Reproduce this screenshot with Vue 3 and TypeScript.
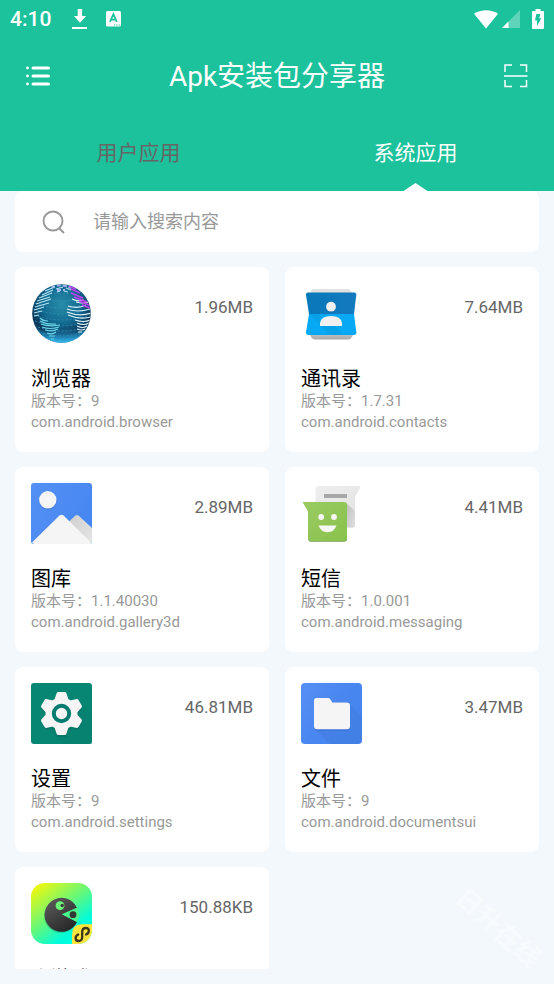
<script setup lang="ts">
import { ref } from 'vue'

interface AppItem {
  icon: string
  name: string
  version?: string
  pkg?: string
  size: string
}

const tabs: string[] = ['用户应用', '系统应用']
const activeTab = ref(1)
const keyword = ref('')

const apps: AppItem[] = [
  { icon: 'browser', name: '浏览器', version: '9', pkg: 'com.android.browser', size: '1.96MB' },
  { icon: 'contacts', name: '通讯录', version: '1.7.31', pkg: 'com.android.contacts', size: '7.64MB' },
  { icon: 'gallery', name: '图库', version: '1.1.40030', pkg: 'com.android.gallery3d', size: '2.89MB' },
  { icon: 'messaging', name: '短信', version: '1.0.001', pkg: 'com.android.messaging', size: '4.41MB' },
  { icon: 'settings', name: '设置', version: '9', pkg: 'com.android.settings', size: '46.81MB' },
  { icon: 'files', name: '文件', version: '9', pkg: 'com.android.documentsui', size: '3.47MB' },
  { icon: 'game', name: '小游戏', size: '150.88KB' },
]

const gearAngles = [0, 60, 120, 180, 240, 300]
</script>

<template>
  <div class="page">
    <header class="header">
      <div class="status">
        <span class="time">4:10</span>
        <svg class="download" width="16" height="22" viewBox="0 0 16 22">
          <path fill="#fff" d="M5.700 1h4.400v7h4L8 14.800 2 8h3.700zM0 19h15v2H0z" />
        </svg>
        <svg class="letter" width="16" height="16" viewBox="0 0 16 16">
          <rect width="15" height="15.500" rx="1.500" fill="#fff" />
          <path d="M4 10.800 7.400 3.200 10.800 10.800M5.200 8.600h4.500" fill="none" stroke="#1bc29c" stroke-width="1.800" />
          <path d="M8 14h1.200M10.300 14h1.200M12.600 14h1.200" stroke="#1bc29c" stroke-width="1.200" />
        </svg>
        <svg class="wifi" width="24" height="19" viewBox="0 0 24 19">
          <path fill="#fff" d="M0 3.800C6.500-1.100 17.500-1.100 24 3.800L12 18.500z" />
        </svg>
        <svg class="signal" width="18" height="18" viewBox="0 0 18 18">
          <path fill="#fff" opacity=".3" d="M18 0v18H0z" />
          <path fill="#fff" d="M6.500 11.500V18H0z" />
        </svg>
        <svg class="battery" width="12" height="20" viewBox="0 0 12 20">
          <path fill="#fff" d="M3.500 0h5v2H11q1 0 1 1v16q0 1-1 1H1q-1 0-1-1V3q0-1 1-1h2.500z" />
          <path fill="#1bc29c" d="M4.300 5h4L7.300 9.300h2L5 17v-5.500H3z" />
        </svg>
      </div>
      <div class="toolbar">
        <button class="tool" type="button" aria-label="菜单">
          <svg width="24" height="22" viewBox="0 0 24 22">
            <path stroke="#fff" stroke-width="3" stroke-linecap="round" d="M7 3h15.500M7 11h15.500M7 19h15.500" />
            <g fill="#fff"><circle cx="1.500" cy="3" r="1.400" /><circle cx="1.500" cy="11" r="1.400" /><circle cx="1.500" cy="19" r="1.400" /></g>
          </svg>
        </button>
        <h1>Apk安装包分享器</h1>
        <button class="tool" type="button" aria-label="扫描">
          <svg width="24" height="24" viewBox="0 0 24 24">
            <path fill="none" stroke="#fff" stroke-width="1.500" d="M8 1H1v7M16 1h6.500v7M1 16v6.500h7M16 22.500h6.500V16M0 12h23.500" />
          </svg>
        </button>
      </div>
      <nav class="tabs">
        <button
          v-for="(tab, i) in tabs"
          :key="tab"
          type="button"
          class="tab"
          :class="{ active: i === activeTab }"
          @click="activeTab = i"
        >{{ tab }}</button>
      </nav>
    </header>

    <main class="content">
      <label class="search">
        <svg width="24" height="24" viewBox="0 0 24 24" fill="none" stroke="#999" stroke-width="1.900">
          <circle cx="11" cy="11" r="9.500" />
          <path d="m17.500 18.500 4.500 4.500" />
        </svg>
        <input v-model="keyword" type="text" placeholder="请输入搜索内容" aria-label="搜索" />
      </label>

      <section class="grid">
        <article v-for="app in apps" :key="app.name" class="card">
          <div class="top">
            <svg v-if="app.icon === 'browser'" class="icon" viewBox="0 0 61 61">
              <defs>
                <radialGradient id="globe" cx=".5" cy=".35" r=".65">
                  <stop offset="0" stop-color="#278da8" /><stop offset=".5" stop-color="#126a91" />
                  <stop offset=".82" stop-color="#0b3557" /><stop offset="1" stop-color="#176993" />
                </radialGradient>
                <linearGradient id="globeGlow" x1="0" y1="0" x2="0" y2="1">
                  <stop offset=".75" stop-color="#2299d6" stop-opacity="0" /><stop offset="1" stop-color="#35b9ed" />
                </linearGradient>
                <clipPath id="globeClip"><circle cx="30.500" cy="30.500" r="29" /></clipPath>
              </defs>
              <circle cx="30.500" cy="30.500" r="29.300" fill="url(#globe)" />
              <circle cx="30.500" cy="30.500" r="29.300" fill="url(#globeGlow)" />
              <g clip-path="url(#globeClip)" fill="none">
                <path stroke="#3794bc" stroke-width=".8" stroke-dasharray="2 2" d="M4 20q26 10 53 0M3 26q28 10 56 0M3 32q28 10 56 0M4 38q26 10 53 0M7 44q23 8 47 0M12 50q18 6 37 0M10 14q21 8 42 0M16 8q15 6 30 0" />
                <path stroke="#b7e5f2" stroke-width="1.100" d="M14 8l10-4M11 12l11-5M8 15l13-5M6 18l13-4M5 21l15-5M4 24l14-4M3 27l10-3M3 30l8-2M3 33l5-1M25 6l7-2M26 9l3-1M35 5l5 2M33 8l4 1" />
                <path stroke="#a8b3ef" stroke-width="2" stroke-dasharray="4 2" d="M20 4q10-4 20 1M26 7h8" />
                <path stroke="#68d4e6" stroke-width="1.200" d="M9 35q3 3 8 3M9 38q7 4 16 3M10 41q8 3 19 1M11 44q8 3 17 0M14 47q7 2 13-1M16 50q5 2 9-1M18 53h6M20 56h3" />
                <path stroke="#def2fa" stroke-width="1.200" d="M37 23q10 3 18-1M36 26q10 4 23 0M36 29q12 5 24 1M37 32q12 5 23 2M44 37q9 3 15 0M46 40q7 3 12 0M46 43q6 3 10 0M46 46q5 2 8 0M47 49h4M45 19q7 2 12 0M41 16q6 3 12 1" />
                <path stroke="#c43df0" stroke-width="1.500" d="m38 3 7 3M40 6l9 4M40 10l12 5M43 14l13 5M48 18l10 4M51 22l8 3" />
              </g>
            </svg>

            <svg v-else-if="app.icon === 'contacts'" class="icon" viewBox="0 0 61 61">
              <defs>
                <linearGradient id="paper" x1="0" y1="0" x2="0" y2="1"><stop stop-color="#e2e2e2" /><stop offset=".85" stop-color="#ccc" /><stop offset="1" stop-color="#a9a9a9" /></linearGradient>
                <linearGradient id="blueTop"><stop stop-color="#0878bb" /><stop offset="1" stop-color="#1479be" /></linearGradient>
              </defs>
              <path fill="url(#paper)" d="M12 6h35q2 0 3 2l2 4v40q-2 4.500-5 4.500H14q-3 0-5-4.500V12l1-4q1-2 2-2z" />
              <path fill="url(#blueTop)" d="M7 9.500h46q2.600 0 2.300 2.500L53 31H8L5 12q-.3-2.500 2-2.500z" />
              <path fill="#08a9f4" d="M8 31h45l2.300 18q.3 3-2.300 3H7.500Q4.700 52 5 49z" />
              <path fill="#0796db" opacity=".45" d="M8 31h11.500v11.700L29 52h13l-9-10H19.500L8 32z" />
              <circle cx="30" cy="24.400" r="5" fill="#075f94" opacity=".35" />
              <circle cx="30" cy="23.700" r="4.900" fill="#f0f0f0" />
              <path fill="#f0f0f0" d="M19 43v-3q1-7 11-7t11 7v3z" />
            </svg>

            <svg v-else-if="app.icon === 'gallery'" class="icon" viewBox="0 0 61 61">
              <defs>
                <linearGradient id="sky" x1="0" y1="0" x2="1" y2=".5"><stop stop-color="#5490f5" /><stop offset="1" stop-color="#4787f1" /></linearGradient>
                <linearGradient id="backHill" x1="0" y1="0" x2="1" y2="1"><stop stop-color="#cfcfcf" /><stop offset="1" stop-color="#e4e4e4" /></linearGradient>
              </defs>
              <rect width="61" height="61" rx="3" fill="url(#sky)" />
              <circle cx="16.900" cy="17.800" r="9" fill="#3469bf" opacity=".4" />
              <circle cx="16.800" cy="16.800" r="8.700" fill="#f5f5f5" />
              <path fill="url(#backHill)" d="M38 38.500 44.500 32.500Q46 31.500 47.500 32.500L61 45v13q0 2-2 2z" />
              <path fill="#f5f5f5" d="M1 59.500 28.500 32.500Q30.500 31 32.500 32.500L60.500 60 59 61H3z" />
            </svg>

            <svg v-else-if="app.icon === 'messaging'" class="icon" viewBox="0 0 61 61">
              <defs>
                <linearGradient id="sheet" x1="0" y1="0" x2="1" y2="1"><stop stop-color="#eee" /><stop offset="1" stop-color="#e2e2e2" /></linearGradient>
                <linearGradient id="bubble" x1="0" y1="0" x2="1" y2="1"><stop stop-color="#9acb63" /><stop offset="1" stop-color="#89c24b" /></linearGradient>
                <linearGradient id="fold" x1="0" y1="0" x2="1" y2="1"><stop stop-color="#bdbdbd" /><stop offset="1" stop-color="#e0e0e0" /></linearGradient>
              </defs>
              <path fill="#c8c8c8" d="M17 10h37v31q0 3.500-3 3.500H17z" />
              <path fill="url(#sheet)" d="M17.500 3H58q2 0 1 2l-5 9v26.500q0 3-3 3H17.500q-3 0-3-3V6q0-3 3-3z" />
              <path fill="url(#fold)" d="m45 20 9 8v12.500q0 3-3 3h-6z" />
              <path fill="#a8a8a8" d="M23 11h23v4H23z" />
              <path fill="#779b58" d="M7.500 25H46v31q0 2.800-3 2.800H10q-2.800 0-2.800-3z" />
              <path fill="url(#bubble)" d="M1.500 19H43q3 0 3 3v33q0 3-3 3H10q-3 0-3-3V28.500z" />
              <circle cx="20.200" cy="34" r="2.900" fill="#f7f7f7" /><circle cx="33" cy="34" r="2.900" fill="#f7f7f7" />
              <path fill="#f7f7f7" d="M17.500 42.500h18q-2.500 6.800-9 6.800t-9-6.800z" />
            </svg>

            <svg v-else-if="app.icon === 'settings'" class="icon" viewBox="0 0 61 61">
              <rect width="61" height="61" rx="3" fill="#078674" />
              <path fill="#077a6b" d="m50 20 11 10v31H32L16 45z" opacity=".4" />
              <g fill="#06685b" opacity=".5" transform="translate(30.500 32)">
                <circle r="16.500" /><path v-for="a in gearAngles" :key="a" :transform="`rotate(${a})`" d="m-7-14 2.200-7Q-4.500-21.500-3-21.500h6q1.500 0 1.800.5L7-14z" />
              </g>
              <g fill="#f5f5f5" transform="translate(30.500 30.500)">
                <circle r="16" /><path v-for="a in gearAngles" :key="a" :transform="`rotate(${a})`" d="m-7-14 2.200-6.500Q-4.500-21.500-3-21.500h6q1.500 0 1.800 1L7-14z" />
              </g>
              <circle cx="30.500" cy="30.500" r="7.700" fill="none" stroke="#077b70" stroke-width="4" />
            </svg>

            <svg v-else-if="app.icon === 'files'" class="icon" viewBox="0 0 61 61">
              <defs><linearGradient id="fileBlue" x1="0" y1="0" x2="1" y2=".7"><stop stop-color="#5790f5" /><stop offset=".5" stop-color="#4a87f0" /><stop offset="1" stop-color="#4585ef" /></linearGradient></defs>
              <rect width="61" height="61" rx="4" fill="url(#fileBlue)" />
              <path fill="#3e78da" opacity=".4" d="m48.500 21 12.500 12v24q0 4-4 4H29L14 46z" />
              <path fill="#285db5" opacity=".4" d="M13 19h36v25.500q0 3-3 3H16q-3 0-3-3z" />
              <path fill="#f5f5f5" d="M15.500 15H27q1.500 0 2.300 1.300l2 3.200H46q3 0 3 3v20.700q0 3-3 3H16q-3 0-3-3V17.500q0-2.500 2.500-2.500z" />
            </svg>

            <svg v-else class="icon" viewBox="0 0 61 61">
              <defs>
                <linearGradient id="lime" x1="0" y1="0" x2=".8" y2="1"><stop offset=".05" stop-color="#f5f70a" /><stop offset=".5" stop-color="#65f879" /><stop offset=".8" stop-color="#03fbd9" /><stop offset="1" stop-color="#00ffe8" /></linearGradient>
                <linearGradient id="pac" x1="0" y1="0" x2=".6" y2="1"><stop stop-color="#606060" /><stop offset="1" stop-color="#292929" /></linearGradient>
                <clipPath id="gameClip"><rect width="61" height="61" rx="14" /></clipPath>
              </defs>
              <g clip-path="url(#gameClip)">
                <path fill="url(#lime)" d="M0 0h61v61H0z" />
                <circle cx="30" cy="33" r="17" fill="#168b69" opacity=".35" />
                <path fill="url(#pac)" d="M31 31.300 46 24.700A17 17 0 1 0 46 39z" />
                <path fill="#4cf58c" d="M31 31.300 46 24.700 48.500 32 46 39z" />
                <circle cx="42" cy="31.700" r="3.400" fill="#303c33" />
                <circle cx="29" cy="22.700" r="4.400" fill="#6df577" /><circle cx="31.200" cy="22.500" r="1.700" fill="#3c3c3c" />
                <path fill="#ffe43d" d="M41 61V52q0-10.700 10-10.700h10V61z" />
                <path fill="none" stroke="#3d381d" stroke-width="2.300" stroke-linecap="round" d="M47.200 51.500c-4 2-3 6.500.3 6.500 2.300 0 3.700-1.500 3.700-4V49c0-2.500 1.500-4 3.700-4 3.500 0 4.300 4.500.2 6.500" />
              </g>
            </svg>
            <span class="size">{{ app.size }}</span>
          </div>
          <h2>{{ app.name }}</h2>
          <p v-if="app.version">版本号：{{ app.version }}</p>
          <p v-if="app.pkg">{{ app.pkg }}</p>
        </article>
      </section>
    </main>
    <div class="watermark">日升在线</div>
  </div>
</template>

<style>
body {
  margin: 0;
}
</style>

<style scoped>
.page {
  position: relative;
  display: flex;
  flex-direction: column;
  box-sizing: border-box;
  height: 100vh;
  padding-bottom: 15px;
  overflow: hidden;
  background: #f2f8fb;
  font-family: Roboto, "Noto Sans CJK SC", sans-serif;
}
button {
  padding: 0;
  border: 0;
  background: none;
  font: inherit;
  cursor: pointer;
}
svg {
  display: block;
  flex: none;
}
.header {
  flex: none;
  background: #1bc29c;
  color: #fff;
}
.status {
  display: flex;
  align-items: center;
  height: 38px;
  padding: 0 10px;
}
.time {
  font-size: 21px;
  font-weight: 500;
}
.download {
  margin-left: 21px;
}
.letter {
  margin-left: 18px;
}
.wifi {
  margin-left: auto;
}
.signal {
  margin-left: 4px;
}
.battery {
  margin-left: 12px;
}
.toolbar {
  display: flex;
  align-items: center;
  justify-content: space-between;
  height: 76px;
  padding: 0 26px;
}
h1 {
  margin: 0;
  padding-top: 2px;
  font-size: 28px;
  font-weight: 400;
  line-height: 40px;
}
.tabs {
  display: flex;
  height: 77px;
}
.tab {
  position: relative;
  flex: 1;
  padding-bottom: 4px;
  color: #666;
  font-size: 21px;
}
.tab.active {
  color: #fff;
}
.tab.active::after {
  content: "";
  position: absolute;
  bottom: 0;
  left: 50%;
  width: 24px;
  height: 8px;
  margin-left: -12px;
  background: #fff;
  clip-path: polygon(50% 0, 100% 100%, 0 100%);
}
.content {
  flex: 1;
  min-height: 0;
  padding: 0 15px;
  overflow: hidden;
}
.search {
  display: flex;
  align-items: center;
  gap: 27px;
  height: 61px;
  margin-bottom: 15px;
  padding: 0 27px;
  box-sizing: border-box;
  border-radius: 8px;
  background: #fff;
}
.search input {
  flex: 1;
  min-width: 0;
  padding: 0;
  border: 0;
  outline: 0;
  background: none;
  color: #333;
  font: inherit;
  font-size: 18px;
}
.search input::placeholder {
  color: #999;
  opacity: 1;
}
.grid {
  display: grid;
  grid-template-columns: 1fr 1fr;
  gap: 15px 16px;
}
.card {
  padding: 16px 16px 19px;
  border-radius: 8px;
  background: #fff;
}
.top {
  display: flex;
  justify-content: space-between;
  margin-bottom: 23px;
}
.icon {
  width: 61px;
  height: 61px;
}
.size {
  margin-top: 12px;
  color: #666;
  font-size: 17px;
  line-height: 24px;
}
h2 {
  margin: 0;
  color: #000;
  font-size: 20px;
  font-weight: 400;
  line-height: 24px;
}
p {
  margin: 0;
  color: #999;
  font-size: 15px;
  line-height: 21px;
}
.watermark {
  position: absolute;
  right: 4px;
  bottom: 38px;
  color: #fff;
  font-size: 26px;
  font-weight: 700;
  line-height: 36px;
  opacity: 0.5;
  transform: rotate(42deg);
  pointer-events: none;
}
</style>
